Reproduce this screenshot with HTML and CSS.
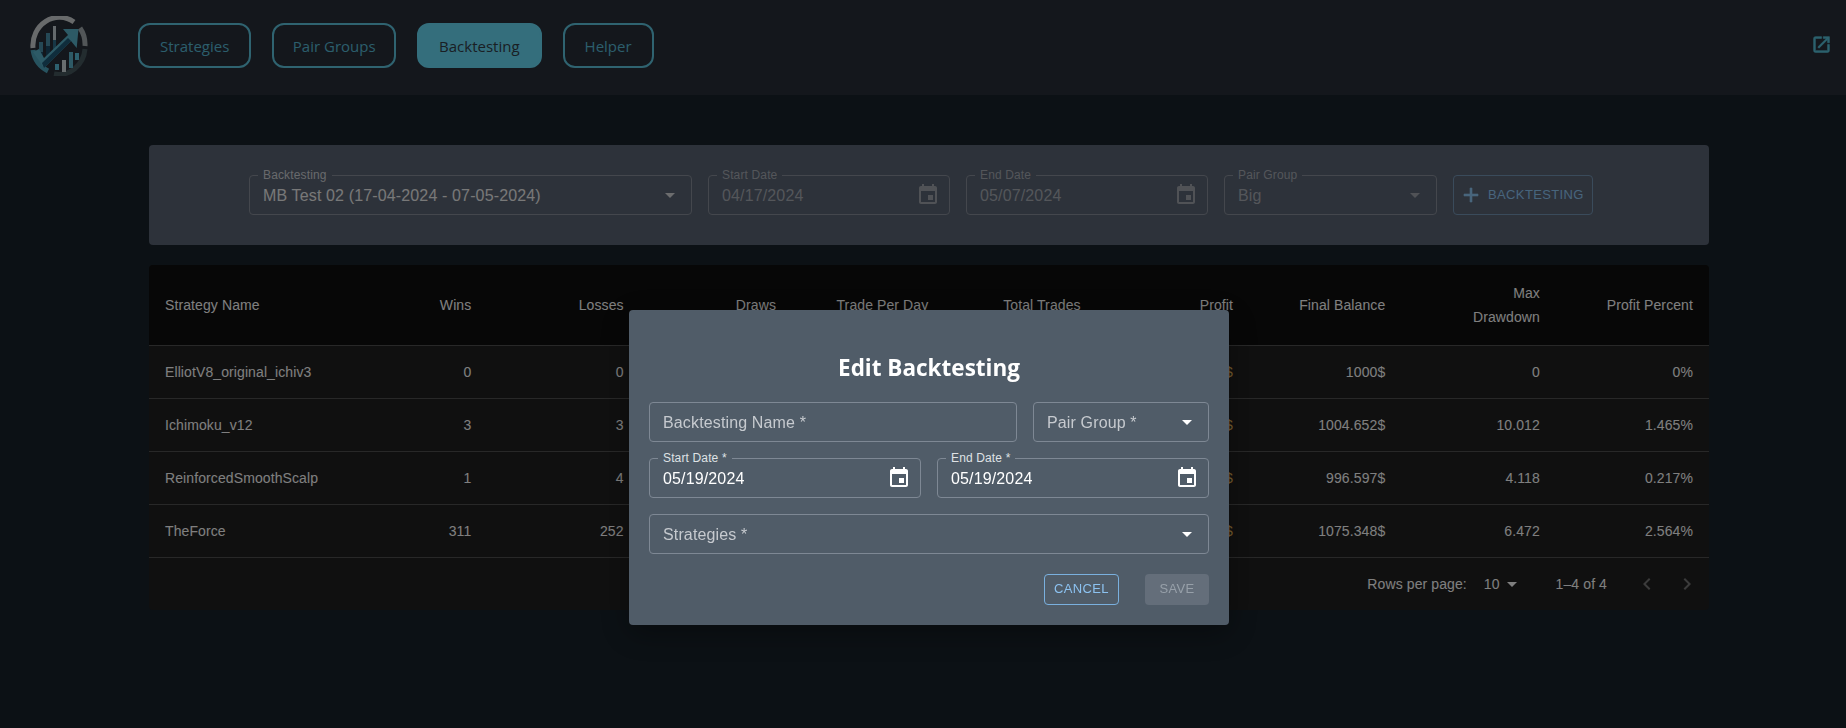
FILE: index.html
```html
<!DOCTYPE html>
<html lang="en">
<head>
    <meta charset="UTF-8">
    <meta name="viewport" content="width=device-width, initial-scale=1.0">
    <title>Backtesting</title>
    <link rel="stylesheet" href="styles.css">
</head>
<body>
    <header class="topbar">
        <svg class="logo" viewBox="0 0 58 60">
            <path d="M3 32A26.5 28 0 0 1 44 6" fill="none" stroke="#d0d4d6" stroke-width="5"/>
            <path d="M50 12A26.5 28 0 0 1 55 30" fill="none" stroke="#a4adb0" stroke-width="5"/>
            <path d="M3 34A26.5 28 0 0 0 18 55" fill="none" stroke="#4fa6bf" stroke-width="5"/>
            <path d="M24 58A26.5 28 0 0 0 55 33" fill="none" stroke="#46585f" stroke-width="5"/>
            <rect x="9" y="26" width="4" height="18" fill="#4a90aa"/>
            <rect x="9" y="36" width="4" height="8" fill="#1c4a66"/>
            <rect x="16" y="17" width="4" height="23" fill="#4a90aa"/>
            <rect x="16" y="30" width="4" height="10" fill="#1c4a66"/>
            <rect x="23" y="10" width="3" height="27" fill="#c9d3d8"/>
            <rect x="23" y="24" width="3" height="12" fill="#2f6f8c"/>
            <rect x="25" y="48" width="4" height="6" fill="#5cc0dc"/>
            <rect x="32" y="44" width="4" height="12" fill="#d0dade"/>
            <rect x="39" y="36" width="4" height="16" fill="#5cb4cc"/>
            <rect x="45" y="37" width="4" height="7" fill="#5cc0dc"/>
            <path d="M3 36L14 52L41 25L46.7 32L48.5 13L33 13L38 19L14 42L9 33z" fill="#5ab4cc"/>
            <path d="M14 52L41 25L38 22L12 47z" fill="#1f5a78"/>
        </svg>
        <nav class="nav-links">
            <a class="nav-link">Strategies</a>
            <a class="nav-link nav-link-tight">Pair Groups</a>
            <a class="nav-link active">Backtesting</a>
            <a class="nav-link">Helper</a>
        </nav>
        <svg class="external-icon" viewBox="0 0 24 24"><path d="M19 19H5V5h7V3H5c-1.11 0-2 .9-2 2v14c0 1.1.89 2 2 2h14c1.1 0 2-.9 2-2v-7h-2v7zM14 3v2h3.59l-9.83 9.83 1.41 1.41L19 6.41V10h2V3h-7z"/></svg>
    </header>

    <main class="content">
        <section class="filter-bar">
            <div class="field w-backtesting">
                <label>Backtesting</label>
                <span class="value">MB Test 02 (17-04-2024 - 07-05-2024)</span>
                <svg class="icon" viewBox="0 0 24 24"><path d="M7 10l5 5 5-5z"/></svg>
            </div>
            <div class="field w-date disabled">
                <label>Start Date</label>
                <span class="value">04/17/2024</span>
                <svg class="icon" viewBox="0 0 24 24"><path d="M17 12h-5v5h5v-5zM16 1v2H8V1H6v2H5c-1.11 0-1.99.9-1.99 2L3 19c0 1.1.89 2 2 2h14c1.1 0 2-.9 2-2V5c0-1.1-.9-2-2-2h-1V1h-2zm3 18H5V8h14v11z"/></svg>
            </div>
            <div class="field w-date disabled">
                <label>End Date</label>
                <span class="value">05/07/2024</span>
                <svg class="icon" viewBox="0 0 24 24"><path d="M17 12h-5v5h5v-5zM16 1v2H8V1H6v2H5c-1.11 0-1.99.9-1.99 2L3 19c0 1.1.89 2 2 2h14c1.1 0 2-.9 2-2V5c0-1.1-.9-2-2-2h-1V1h-2zm3 18H5V8h14v11z"/></svg>
            </div>
            <div class="field w-pair disabled">
                <label>Pair Group</label>
                <span class="value">Big</span>
                <svg class="icon" viewBox="0 0 24 24"><path d="M7 10l5 5 5-5z"/></svg>
            </div>
            <button class="add-btn">
                <svg viewBox="0 0 24 24"><path d="M19 13h-6v6h-2v-6H5v-2h6V5h2v6h6v2z"/></svg>
                Backtesting
            </button>
        </section>

        <section class="table-card">
            <table>
                <thead>
                    <tr>
                        <th class="name-col">Strategy Name</th>
                        <th>Wins</th>
                        <th>Losses</th>
                        <th>Draws</th>
                        <th>Trade Per Day</th>
                        <th>Total Trades</th>
                        <th>Profit</th>
                        <th>Final Balance</th>
                        <th class="drawdown-col">Max<br>Drawdown</th>
                        <th class="percent-col">Profit Percent</th>
                    </tr>
                </thead>
                <tbody>
                    <tr>
                        <td class="name-col">ElliotV8_original_ichiv3</td>
                        <td>0</td><td>0</td><td>0</td><td>0</td><td>0</td>
                        <td class="profit">0$</td><td>1000$</td><td>0</td><td>0%</td>
                    </tr>
                    <tr>
                        <td class="name-col">Ichimoku_v12</td>
                        <td>3</td><td>3</td><td>0</td><td>0.3</td><td>6</td>
                        <td class="profit">4.652$</td><td>1004.652$</td><td>10.012</td><td>1.465%</td>
                    </tr>
                    <tr>
                        <td class="name-col">ReinforcedSmoothScalp</td>
                        <td>1</td><td>4</td><td>0</td><td>0.25</td><td>5</td>
                        <td class="profit">-3.403$</td><td>996.597$</td><td>4.118</td><td>0.217%</td>
                    </tr>
                    <tr>
                        <td class="name-col">TheForce</td>
                        <td>311</td><td>252</td><td>0</td><td>28.15</td><td>563</td>
                        <td class="profit">75.348$</td><td>1075.348$</td><td>6.472</td><td>2.564%</td>
                    </tr>
                </tbody>
            </table>
            <div class="pagination">
                <span>Rows per page:</span>
                <span class="page-size">10 <svg viewBox="0 0 24 24"><path d="M7 10l5 5 5-5z"/></svg></span>
                <span class="page-range">1–4 of 4</span>
                <svg class="page-arrow" viewBox="0 0 24 24"><path d="M15.41 16.59L10.83 12l4.58-4.59L14 6l-6 6 6 6 1.41-1.41z"/></svg>
                <svg class="page-arrow" viewBox="0 0 24 24"><path d="M8.59 16.59L13.17 12 8.59 7.41 10 6l6 6-6 6-1.41-1.41z"/></svg>
            </div>
        </section>
    </main>

    <div class="backdrop"></div>

    <div class="modal">
        <h2>Edit Backtesting</h2>
        <div class="form-row row-name">
            <div class="field">
                <span class="placeholder">Backtesting Name *</span>
            </div>
            <div class="field">
                <span class="placeholder">Pair Group *</span>
                <svg class="icon" viewBox="0 0 24 24"><path d="M7 10l5 5 5-5z"/></svg>
            </div>
        </div>
        <div class="form-row row-dates">
            <div class="field">
                <label>Start Date *</label>
                <span class="value">05/19/2024</span>
                <svg class="icon" viewBox="0 0 24 24"><path d="M17 12h-5v5h5v-5zM16 1v2H8V1H6v2H5c-1.11 0-1.99.9-1.99 2L3 19c0 1.1.89 2 2 2h14c1.1 0 2-.9 2-2V5c0-1.1-.9-2-2-2h-1V1h-2zm3 18H5V8h14v11z"/></svg>
            </div>
            <div class="field">
                <label>End Date *</label>
                <span class="value">05/19/2024</span>
                <svg class="icon" viewBox="0 0 24 24"><path d="M17 12h-5v5h5v-5zM16 1v2H8V1H6v2H5c-1.11 0-1.99.9-1.99 2L3 19c0 1.1.89 2 2 2h14c1.1 0 2-.9 2-2V5c0-1.1-.9-2-2-2h-1V1h-2zm3 18H5V8h14v11z"/></svg>
            </div>
        </div>
        <div class="form-row">
            <div class="field">
                <span class="placeholder">Strategies *</span>
                <svg class="icon" viewBox="0 0 24 24"><path d="M7 10l5 5 5-5z"/></svg>
            </div>
        </div>
        <div class="modal-actions">
            <button class="btn-cancel">Cancel</button>
            <button class="btn-save" disabled>Save</button>
        </div>
    </div>
</body>
</html>
```

FILE: styles.css
```css
/* General Styles */
body {
    font-family: "Liberation Sans", Arial, sans-serif;
    margin: 0;
    min-height: 728px;
    background-color: #18222a;
    color: #fff;
    overflow: hidden;
}

/* Top bar */
.topbar {
    display: flex;
    align-items: center;
    height: 91px;
    padding: 0 14px 4px 30px;
    background-color: #282e38;
}

.logo {
    width: 58px;
    height: 60px;
    margin-right: 50px;
}

.nav-links {
    display: flex;
    gap: 21px;
    flex: 1;
}

.nav-link {
    display: flex;
    align-items: center;
    justify-content: center;
    height: 41px;
    padding: 0 20px;
    border: 2px solid #5fc6e0;
    border-radius: 12px;
    font-family: "Open Sans", sans-serif;
    font-size: 15px;
    color: #58bcd8;
}

.nav-link-tight {
    padding: 0 18.5px;
}

.nav-link.active {
    background-color: #68dcf8;
    border-color: #68dcf8;
    color: #343e48;
}

.external-icon {
    width: 21px;
    height: 21px;
    margin-bottom: 2px;
    fill: #58c4dc;
    stroke: #58c4dc;
    stroke-width: 0.7;
}

/* Main content */
.content {
    padding: 50px 137px 0 149px;
}

.filter-bar {
    display: flex;
    justify-content: center;
    align-items: center;
    gap: 16px;
    padding: 30px 16px 30px 0;
    background-color: #5a6474;
    border-radius: 4px;
    margin-bottom: 20px;
}

/* Outlined fields */
.field {
    position: relative;
    display: flex;
    align-items: center;
    justify-content: space-between;
    box-sizing: border-box;
    height: 40px;
    padding: 1px 9px 0 13px;
    border: 1px solid #888f9a;
    border-radius: 4px;
    font-size: 16px;
    letter-spacing: 0.14px;
}

.field label {
    position: absolute;
    top: -8px;
    left: 8px;
    padding: 0 5px;
    font-size: 12px;
    line-height: 14px;
    background-color: #5a6474;
    color: #d0d3d8;
}

.field .icon {
    width: 24px;
    height: 24px;
    margin-top: -1px;
    fill: #d8dadd;
}

.w-backtesting { width: 443px; }
.w-date { width: 242px; }
.w-pair { width: 213px; }

.field .value {
    color: #f0f0f0;
}

.field.disabled .value,
.field.disabled label {
    color: #a8adb5;
}

.field.disabled .icon {
    fill: #a0a5ac;
}

.add-btn {
    display: flex;
    align-items: center;
    box-sizing: border-box;
    width: 140px;
    height: 40px;
    padding: 0 5px 2px;
    gap: 5px;
    border: 1px solid #7597b7;
    border-radius: 4px;
    background: none;
    font-family: inherit;
    font-size: 13px;
    letter-spacing: 0.37px;
    text-transform: uppercase;
    color: #90caf9;
}

.add-btn svg {
    width: 24px;
    height: 24px;
    margin-top: 2px;
    fill: #90caf9;
    stroke: #90caf9;
    stroke-width: 0.6;
}

/* Table */
.table-card {
    background-color: #212121;
    border-radius: 4px;
    overflow: hidden;
}

table {
    width: 100%;
    border-collapse: collapse;
    table-layout: fixed;
    font-size: 14px;
    letter-spacing: 0.1px;
}

th, td {
    box-sizing: border-box;
    padding: 16px;
    text-align: right;
    font-weight: 400;
    line-height: 20px;
    border-bottom: 1px solid #515151;
    color: #fff;
}

thead th {
    width: 152.33px;
    line-height: 24px;
    background-color: #0e0e0e;
}

thead th.name-col {
    width: 186px;
}

thead th.drawdown-col {
    width: 154.6px;
}

thead th.percent-col {
    width: auto;
}

.name-col {
    text-align: left;
    white-space: nowrap;
}

.profit {
    color: #f0c060;
}

.pagination {
    display: flex;
    justify-content: flex-end;
    align-items: center;
    height: 52px;
    padding-right: 2px;
    font-size: 14px;
    letter-spacing: 0.1px;
}

.page-size {
    display: flex;
    align-items: center;
    margin-left: 17px;
}

.page-size svg {
    width: 24px;
    height: 24px;
    fill: #fff;
}

.page-range {
    margin: 0 20px 0 32px;
}

.page-arrow {
    width: 24px;
    height: 24px;
    padding: 0 8px;
    fill: #777;
}

/* Modal */
.backdrop {
    position: fixed;
    inset: 0;
    background-color: rgba(0, 0, 0, 0.5);
}

.modal {
    position: fixed;
    left: 629px;
    top: 310px;
    box-sizing: border-box;
    width: 600px;
    height: 315px;
    padding: 40px 20px 20px;
    background-color: #505c68;
    border-radius: 4px;
    box-shadow: 0 8px 30px rgba(0, 0, 0, 0.35);
}

.modal h2 {
    margin: 0 0 16px;
    font-family: "Open Sans", sans-serif;
    font-size: 22.5px;
    font-weight: 700;
    line-height: 36px;
    text-align: center;
    color: #fff;
}

.form-row {
    display: grid;
    gap: 16px;
    margin-bottom: 16px;
}

.row-name {
    grid-template-columns: 368px 176px;
}

.row-dates {
    grid-template-columns: 1fr 1fr;
}

.modal .field {
    border-color: #7e8894;
}

.modal .field label {
    background-color: #505c68;
    color: #dfe2e5;
}

.modal .field .value {
    color: #fff;
}

.modal .field .icon {
    fill: #fff;
}

.placeholder {
    color: #c6cacf;
}

.modal-actions {
    display: flex;
    justify-content: flex-end;
    gap: 26px;
    margin-top: 20px;
}

.modal-actions button {
    box-sizing: border-box;
    height: 31px;
    padding-bottom: 3px;
    border-radius: 4px;
    font-family: inherit;
    font-size: 13px;
    font-weight: 500;
    letter-spacing: 0.37px;
    text-transform: uppercase;
}

.btn-cancel {
    width: 75px;
    border: 1px solid #7ab0de;
    background: none;
    color: #8cc2f0;
}

.btn-save {
    width: 64px;
    border: none;
    background-color: #646e7a;
    color: #97a0a9;
}
```
